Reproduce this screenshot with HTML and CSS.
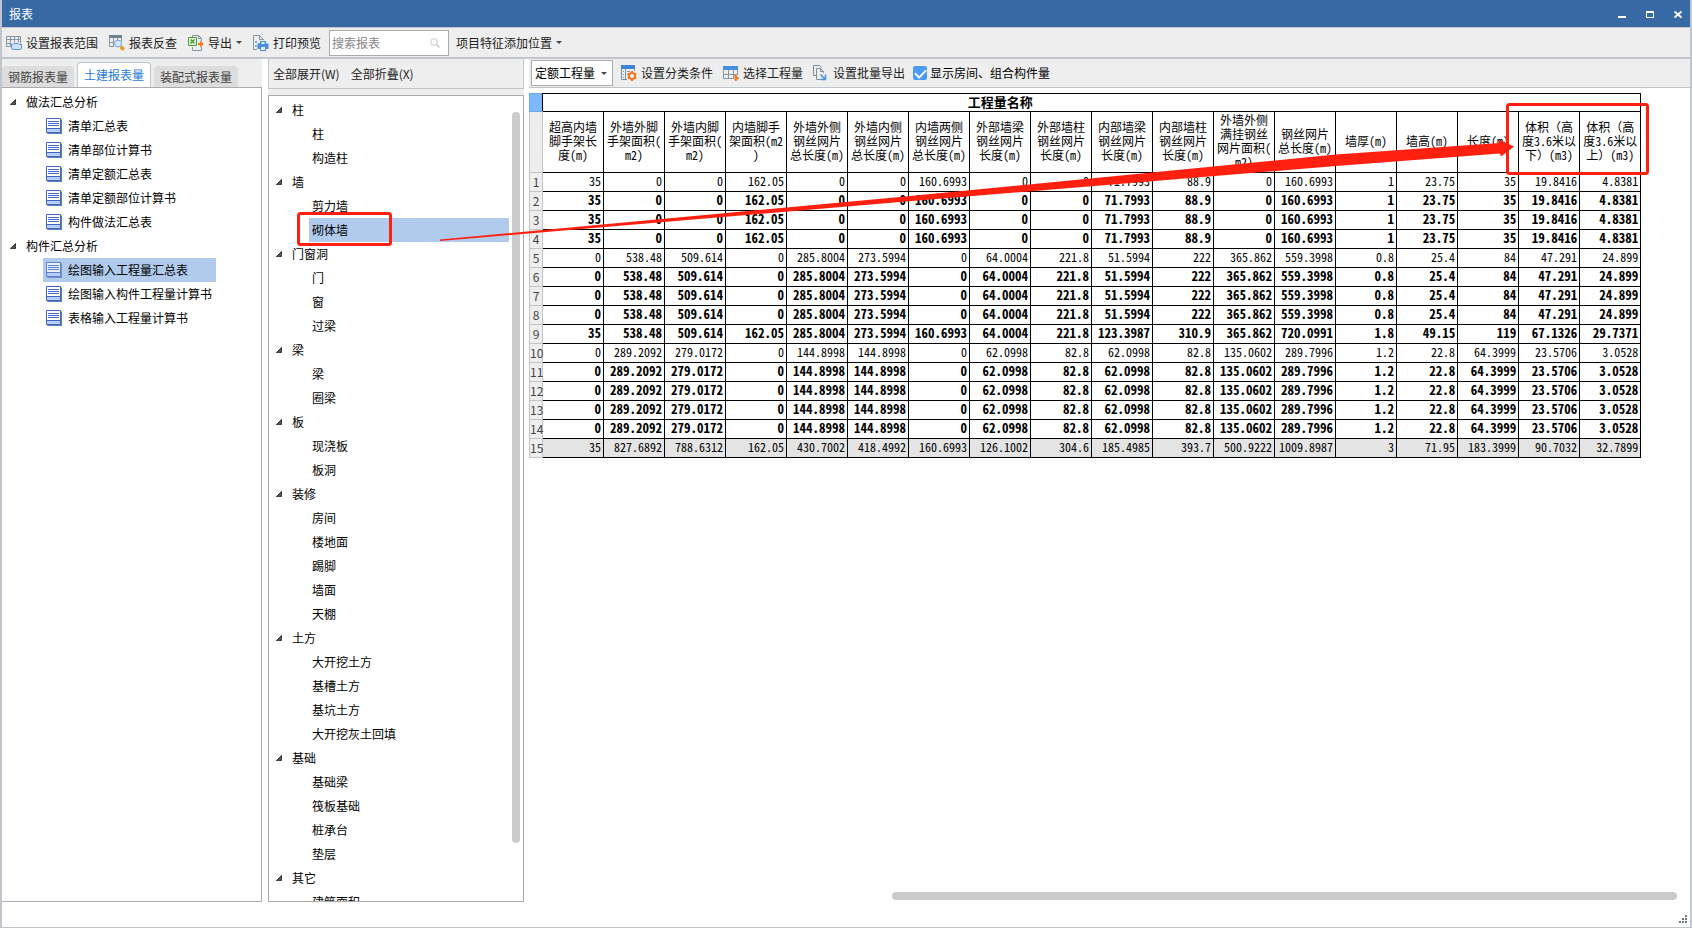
FILE: index.html
```html
<!DOCTYPE html>
<html lang="zh-CN">
<head>
<meta charset="utf-8">
<title>报表</title>
<link rel="stylesheet" href="styles.css">
</head>
<body>
<div class="window">
  <header class="titlebar">
    <h1 class="title">报表</h1>
    <div class="window-buttons">
      <button class="window-button" aria-label="最小化"><svg width="10" height="10"><path d="M1 7h8v2H1z" fill="#fff"/></svg></button>
      <button class="window-button" aria-label="最大化"><svg width="10" height="10"><path d="M1 2h8v7H1zM2 4v4h6V4z" fill="#fff" fill-rule="evenodd"/></svg></button>
      <button class="window-button" aria-label="关闭"><svg width="10" height="10"><path d="M1.5 2.5l7 6M8.500 2.500l-7 6" stroke="#fff" stroke-width="1.800"/></svg></button>
    </div>
  </header>

  <div class="toolbar">
    <button class="tool">
      <svg width="16" height="16" fill="none"><path d="M.5 1.500h14v7M.5 1.500v10H5M.5 4.500h14M.5 8.500h5M4.500 1.500v10M8.500 1.500v6M12.500 1.500v6" stroke="#8796a3"/><path d="M5.500 9.500h1.500l1-1h4l1 1h2.500v4l-1.500 1h-7l-1.500-1z" fill="#cfe2f8" stroke="#5b93d8"/></svg>设置报表范围</button>
    <button class="tool">
      <svg width="16" height="16" fill="none"><path d="M0 0h13v3H0z" fill="#73828f"/><path d="M.5 3v8.500H5M.5 7.500H5M4.500 3v9M8.500 3v2M12.500 3v3" stroke="#8796a3"/><circle cx="9" cy="8.500" r="3.500" fill="#d6e8fb" stroke="#6fa3e4"/><path d="M13 10.500l3 3-2.500 2.500-3-3z" fill="#f7941d"/></svg>报表反查</button>
    <button class="tool">
      <svg width="16" height="16" fill="none"><path d="M4.500 2V.5h6l3 3V6M13.500 12v3.500h-9V12M10.500.5v3h3" stroke="#8796a3"/><path d="M.5 2.500h8v8h-8z" fill="#e9f5e4" stroke="#4b9b36"/><path d="M2.500 4.500l4 4M6.500 4.500l-4 4" stroke="#4b9b36" stroke-width="1.500"/><path d="M10 8h2V5.500L16 9l-4 3.500V10h-2z" fill="#f47a20"/></svg>导出<span class="caret"></span></button>
    <button class="tool">
      <svg width="16" height="16" fill="none"><path d="M4 14.500H.5V.5h6l4 4M6.500.5v4h4" stroke="#8796a3"/><path d="M2 6h2v2H2zM2 10h2v2H2zM5 8h2v2H5z" fill="#9dabb7"/><path d="M7 8.500V6h6v2.500h2.500V14H13v2H7v-2H4.500V8.500z" fill="#4a90e2"/><path d="M8.500 7h3v2h-3zM8 12h4v3H8z" fill="#e8f2fd"/></svg>打印预览</button>
    <div class="search">
      <input class="search-input" type="text" placeholder="搜索报表" aria-label="搜索报表">
      <svg class="search-icon" width="10" height="10" fill="none" stroke="#c9c9c9"><circle cx="4" cy="4" r="3.300"/><path d="M6.500 6.500L9.500 9.500" stroke-width="1.500"/></svg>
    </div>
    <button class="tool">项目特征添加位置<span class="caret"></span></button>
  </div>

  <main class="workspace">
    <section class="reports">
      <div class="tabs" role="tablist">
        <button class="tab" role="tab">钢筋报表量</button>
        <button class="tab tab-active" role="tab" aria-selected="true">土建报表量</button>
        <button class="tab" role="tab">装配式报表量</button>
      </div>
      <div class="report-panel">
        <svg class="symbols" width="0" height="0" aria-hidden="true">
          <symbol id="sheet" viewBox="0 0 16 16"><path d="M2 2h14v14H2z" fill="#8f98a8"/><path class="sheet-page" d="M.5.5h14v14H.5z"/><path class="sheet-foot" d="M1 11h13v3H1z"/><path class="sheet-line" d="M2 3.500h11M2 5.500h11M2 7.500h11M1 10.500h13" fill="none"/></symbol>
          <symbol id="fold" viewBox="0 0 7 7"><path d="M6.500.5v6H.5z" fill="#555" stroke="#222"/></symbol>
        </svg>
        <ul class="tree">
          <li><span class="branch"><svg class="fold"><use href="#fold"/></svg>做法汇总分析</span>
            <ul class="tree">
              <li><a class="report" href="#"><svg class="sheet"><use href="#sheet"/></svg>清单汇总表</a></li>
              <li><a class="report" href="#"><svg class="sheet"><use href="#sheet"/></svg>清单部位计算书</a></li>
              <li><a class="report" href="#"><svg class="sheet"><use href="#sheet"/></svg>清单定额汇总表</a></li>
              <li><a class="report" href="#"><svg class="sheet"><use href="#sheet"/></svg>清单定额部位计算书</a></li>
              <li><a class="report" href="#"><svg class="sheet"><use href="#sheet"/></svg>构件做法汇总表</a></li>
            </ul>
          </li>
          <li><span class="branch"><svg class="fold"><use href="#fold"/></svg>构件汇总分析</span>
            <ul class="tree">
              <li><a class="report report-selected" href="#"><svg class="sheet"><use href="#sheet"/></svg>绘图输入工程量汇总表</a></li>
              <li><a class="report" href="#"><svg class="sheet"><use href="#sheet"/></svg>绘图输入构件工程量计算书</a></li>
              <li><a class="report" href="#"><svg class="sheet"><use href="#sheet"/></svg>表格输入工程量计算书</a></li>
            </ul>
          </li>
        </ul>
      </div>
    </section>

    <section class="components">
      <div class="fold-bar">
        <button class="tool">全部展开(W)</button>
        <button class="tool">全部折叠(X)</button>
      </div>
      <div class="component-panel">
        <ul class="tree component-tree">
          <li><span class="branch"><svg class="fold"><use href="#fold"/></svg>柱</span>
            <ul class="tree"><li><a class="component" href="#">柱</a></li><li><a class="component" href="#">构造柱</a></li></ul></li>
          <li><span class="branch"><svg class="fold"><use href="#fold"/></svg>墙</span>
            <ul class="tree"><li><a class="component" href="#">剪力墙</a></li><li><a class="component component-selected" href="#">砌体墙</a></li></ul></li>
          <li><span class="branch"><svg class="fold"><use href="#fold"/></svg>门窗洞</span>
            <ul class="tree"><li><a class="component" href="#">门</a></li><li><a class="component" href="#">窗</a></li><li><a class="component" href="#">过梁</a></li></ul></li>
          <li><span class="branch"><svg class="fold"><use href="#fold"/></svg>梁</span>
            <ul class="tree"><li><a class="component" href="#">梁</a></li><li><a class="component" href="#">圈梁</a></li></ul></li>
          <li><span class="branch"><svg class="fold"><use href="#fold"/></svg>板</span>
            <ul class="tree"><li><a class="component" href="#">现浇板</a></li><li><a class="component" href="#">板洞</a></li></ul></li>
          <li><span class="branch"><svg class="fold"><use href="#fold"/></svg>装修</span>
            <ul class="tree"><li><a class="component" href="#">房间</a></li><li><a class="component" href="#">楼地面</a></li><li><a class="component" href="#">踢脚</a></li><li><a class="component" href="#">墙面</a></li><li><a class="component" href="#">天棚</a></li></ul></li>
          <li><span class="branch"><svg class="fold"><use href="#fold"/></svg>土方</span>
            <ul class="tree"><li><a class="component" href="#">大开挖土方</a></li><li><a class="component" href="#">基槽土方</a></li><li><a class="component" href="#">基坑土方</a></li><li><a class="component" href="#">大开挖灰土回填</a></li></ul></li>
          <li><span class="branch"><svg class="fold"><use href="#fold"/></svg>基础</span>
            <ul class="tree"><li><a class="component" href="#">基础梁</a></li><li><a class="component" href="#">筏板基础</a></li><li><a class="component" href="#">桩承台</a></li><li><a class="component" href="#">垫层</a></li></ul></li>
          <li><span class="branch"><svg class="fold"><use href="#fold"/></svg>其它</span>
            <ul class="tree"><li><a class="component" href="#">建筑面积</a></li></ul></li>
        </ul>
        <div class="scroll-track"><div class="scroll-thumb"></div></div>
      </div>
    </section>

    <section class="sheet-area">
      <div class="sheet-bar">
        <span class="kind"><select class="kind-select" aria-label="工程量类型"><option>定额工程量</option></select><span class="caret"></span></span>
        <button class="tool">
          <svg width="16" height="16" fill="none"><path d="M0 0h14v4H0z" fill="#3f83d8"/><path d="M.5 4v10.500H6M13.500 4v2M4.500 4v10M2 6.500h1M2 9.500h1M2 12.500h1M6 6.500h3M6 9.500h1" stroke="#7f8f9e"/><circle cx="11" cy="11" r="3" stroke="#f0792b" stroke-width="2"/><path d="M11 6v2M11 14v2M6.700 8.500l1.700 1M13.600 12.500l1.700 1M6.700 13.500l1.700-1M13.600 9.500l1.700-1" stroke="#f0792b" stroke-width="2"/></svg>设置分类条件</button>
        <button class="tool">
          <svg width="16" height="16" fill="none"><path d="M0 1h15v4H0z" fill="#4a8fdf"/><path d="M.5 5v8.500H11M14.500 5v5M0 9.500h14M5.500 5v8M10.500 5v8" stroke="#8796a3"/><path d="M12 9.500l4 4-2 .3-1 2.200-1-1z" fill="#f47a20" stroke="#f47a20"/></svg>选择工程量</button>
        <button class="tool">
          <svg width="16" height="16" fill="none"><path d="M3 10.500H.5V.5h6l2 2" stroke="#7f8f9e"/><path d="M8 14.500H3.500v-11h4l3 3V8M7.500 3.500v3h3" stroke="#7f8f9e"/><path d="M7.500 9.500l4.500 4.500M12.500 9.500v5H8" stroke="#4a8fdf" stroke-width="1.500"/></svg>设置批量导出</button>
        <label class="show-rooms"><input class="check" type="checkbox" checked>显示房间、组合构件量</label>
      </div>
      <div class="sheet-body">
        <table class="quantities">
          <colgroup><col class="col-number"><col span="18" class="col-value"></colgroup>
          <thead>
            <tr class="caption-row"><td class="corner"></td><th class="caption" colspan="15">工程量名称</th><th class="caption-rest" colspan="3"></th></tr>
            <tr class="head-row">
              <td class="number"></td>
              <th>超高内墙<br>脚手架长<br>度(m)</th>
              <th>外墙外脚<br>手架面积(<br>m2)</th>
              <th>外墙内脚<br>手架面积(<br>m2)</th>
              <th>内墙脚手<br>架面积(m2<br>)</th>
              <th>外墙外侧<br>钢丝网片<br>总长度(m)</th>
              <th>外墙内侧<br>钢丝网片<br>总长度(m)</th>
              <th>内墙两侧<br>钢丝网片<br>总长度(m)</th>
              <th>外部墙梁<br>钢丝网片<br>长度(m)</th>
              <th>外部墙柱<br>钢丝网片<br>长度(m)</th>
              <th>内部墙梁<br>钢丝网片<br>长度(m)</th>
              <th>内部墙柱<br>钢丝网片<br>长度(m)</th>
              <th>外墙外侧<br>满挂钢丝<br>网片面积(<br>m2)</th>
              <th>钢丝网片<br>总长度(m)</th>
              <th>墙厚(m)</th>
              <th>墙高(m)</th>
              <th>长度(m)</th>
              <th>体积（高<br>度3.6米以<br>下）(m3)</th>
              <th>体积（高<br>度3.6米以<br>上）(m3)</th>
            </tr>
          </thead>
          <tbody id="rows"></tbody>
        </table>
        <div class="scroll-bottom"><div class="scroll-bottom-thumb"></div></div>
      </div>
    </section>
  </main>
  <footer class="statusbar">
    <svg width="10" height="10" fill="#6d7480"><path d="M7 0h2v2H7zM4 3h2v2H4zM7 3h2v2H7zM1 6h2v2H1zM4 6h2v2H4zM7 6h2v2H7z"/></svg>
  </footer>

  <svg class="markup" width="1692" height="300" aria-hidden="true">
    <g fill="none" stroke="#ff2010" stroke-width="3"><rect x="298.500" y="213.500" width="92" height="31" rx="2"/><rect x="1507.500" y="104.500" width="140" height="69" rx="2"/></g>
    <path d="M440 239.500L900 197L1336 154.500L1499 143V139.500L1514 146.500L1501 156.500L1500 153.500L1336 166L900 202L440 241z" fill="#ff2010"/>
  </svg>
</div>
<script src="rows.js"></script>
</body>
</html>
```
FILE: styles.css
```css
* { box-sizing: border-box; }
body { margin: 0; }
body, button, input, select {
  font: 12px/16px "Noto Sans CJK SC", sans-serif;
  color: #000;
}
button { padding: 0; border: 0; background: none; white-space: nowrap; }
ul { margin: 0; padding: 0; list-style: none; }
a { color: inherit; text-decoration: none; }

.window {
  position: relative;
  display: flex;
  flex-direction: column;
  height: 100vh;
  border: solid #c0c5ce;
  border-width: 0 2px 1px;
  background: #fff;
  overflow: hidden;
}

.titlebar {
  flex: none;
  display: flex;
  justify-content: space-between;
  align-items: center;
  height: 27px;
  margin: 0 -2px;
  padding: 0 9px;
  background: #376aa5;
}
.title { margin: 0; font-size: 12px; font-weight: 400; color: #fff; }
.window-buttons { display: flex; gap: 18px; }
.window-button { display: flex; width: 10px; height: 10px; }

.toolbar {
  flex: none;
  display: flex;
  align-items: center;
  gap: 11px;
  height: 32px;
  padding-left: 4px;
  border-top: 1px solid #c0c5ce;
  border-bottom: 2px solid #c0c5ce;
  background: #eee;
}
.tool { display: flex; align-items: center; gap: 4px; color: #222; }
.caret {
  border: 3px solid transparent;
  border-top-color: #444;
  border-bottom: 0;
}
.search {
  display: flex;
  align-items: center;
  width: 120px;
  height: 26px;
  margin: 0 -4px 0 -3px;
  padding: 0 8px 0 2px;
  border: 1px solid #ababab;
  background: #fff;
}
.search-input { flex: 1; min-width: 0; padding: 0; border: 0; outline: 0; }
.search-input::placeholder { color: #868686; }

.workspace { flex: 1; display: flex; min-height: 0; }

.reports { flex: none; display: flex; flex-direction: column; width: 260px; background: #eee; }
.tabs { display: flex; align-items: flex-end; gap: 3px; height: 28px; }
.tab {
  height: 21px;
  padding: 0 6px;
  border-radius: 4px 4px 0 0;
  background: #ddd;
  color: #444;
}
.tab-active {
  height: 25px;
  border: 1px solid #c0c5ce;
  border-bottom: 0;
  background: #fff;
  color: #1f7ae0;
}
.report-panel {
  flex: 1;
  padding-top: 2px;
  border: 1px solid #ababb0;
  border-left: 0;
  background: #fff;
}
.symbols { display: block; }

.branch { display: flex; align-items: center; gap: 10px; height: 24px; padding-left: 8px; }
.fold { width: 6px; height: 6px; }
.report {
  display: flex;
  align-items: center;
  gap: 6px;
  width: 173px;
  height: 24px;
  margin-left: 41px;
  padding-left: 3px;
}
.report-selected, .component-selected { background: #b1cbec; }
.sheet { width: 16px; height: 16px; fill: #fff; stroke: #3f66c4; }
.sheet-page { stroke: #3f66c4; fill: #fff; }
.sheet-foot { stroke: none; fill: #b9cdfa; }
.report-selected .sheet { opacity: .75; }

.components {
  flex: none;
  display: flex;
  flex-direction: column;
  width: 256px;
  margin: 0 5px 0 6px;
  background: #eee;
}
.fold-bar {
  flex: none;
  display: flex;
  align-items: center;
  gap: 11px;
  height: 30px;
  margin-bottom: 6px;
  padding-left: 4px;
  border: 1px solid #c0c5ce;
  border-top: 0;
}
.component-panel {
  flex: 1;
  display: flex;
  min-height: 0;
  padding-top: 2px;
  border: 1px solid #ababab;
  background: #fff;
  overflow: hidden;
}
.component-tree { flex: 1; margin-right: 3px; }
.component-tree .branch { padding-left: 7px; }
.component { display: block; height: 24px; margin-left: 40px; padding-left: 3px; line-height: 24px; }
.scroll-track { flex: none; width: 11px; padding: 14px 3px 58px 0; }
.scroll-thumb { width: 8px; height: 100%; border-radius: 4px; background: #cbcbcb; }

.sheet-area { flex: 1; display: flex; flex-direction: column; min-width: 0; }
.sheet-bar {
  flex: none;
  display: flex;
  align-items: center;
  gap: 10px;
  height: 29px;
  padding-left: 2px;
  border-bottom: 1px solid #c0c5ce;
  background: #eee;
}
.kind {
  display: flex;
  align-items: center;
  width: 82px;
  height: 26px;
  margin-right: -2px;
  padding: 0 5px 0 3px;
  border: 1px solid #ababab;
  background: #fff;
}
.kind-select { flex: 1; min-width: 0; padding: 0; border: 0; appearance: none; background: none; }
.show-rooms { display: flex; align-items: center; gap: 3px; margin-left: -2px; }
.check {
  display: flex;
  justify-content: center;
  width: 14px;
  height: 14px;
  margin: 0;
  border-radius: 2px;
  appearance: none;
  background: #fff;
}
.check:checked { background: #4a9bf5; }
.check:checked::after {
  content: "";
  width: 5px;
  height: 9px;
  margin-top: 1px;
  border: solid #fff;
  border-width: 0 2px 2px 0;
  transform: rotate(45deg);
}

.sheet-body { flex: 1; display: flex; flex-direction: column; min-height: 0; padding-top: 5px; }
.quantities {
  width: 1111px;
  table-layout: fixed;
  border-collapse: collapse;
}
.col-number { width: 13px; }
.col-value { width: 61px; }
.quantities th, .quantities td {
  padding: 0 0 2px;
  border: 1px solid #000;
  font-family: "Noto Sans Mono CJK SC", "Noto Sans CJK SC", monospace;
  font-size: 12px;
  line-height: 14px;
  white-space: nowrap;
}
.quantities th { font-weight: 400; }
.quantities .caption { border-right: 0; font-size: 13px; font-weight: 700; }
.quantities .caption-rest { border-left: 0; }
.caption-row { height: 18px; }
.head-row { height: 61px; }
.value-row { height: 19px; }
.quantities .value { padding-right: 2px; text-align: right; }
.quantities .bold-row .value { font-size: 13px; font-weight: 700; }
.total-row .value { background: #e4e4e4; }
.quantities .corner { border: 1px solid #6aa9ee; border-right-color: #000; background: #7fb8fa; }
.quantities .number {
  padding: 0;
  border-color: #c4c4c4;
  background: #eee;
  font-family: "Noto Sans CJK SC", sans-serif;
  color: #444;
  text-align: center;
}
.scroll-bottom { margin-top: auto; padding: 0 13px 2px 363px; }
.scroll-bottom-thumb { height: 8px; border-radius: 4px; background: #cbcbcb; }

.statusbar { flex: none; display: flex; justify-content: flex-end; align-items: flex-end; height: 25px; padding: 2px; }

.markup { position: absolute; left: -2px; top: 0; pointer-events: none; }
```
FILE: rows.js
```js
const wall = "35 0 0 162.05 0 0 160.6993 0 0 71.7993 88.9 0 160.6993 1 23.75 35 19.8416 4.8381";
const second = "0 538.48 509.614 0 285.8004 273.5994 0 64.0004 221.8 51.5994 222 365.862 559.3998 0.8 25.4 84 47.291 24.899";
const sum = "35 538.48 509.614 162.05 285.8004 273.5994 160.6993 64.0004 221.8 123.3987 310.9 365.862 720.0991 1.8 49.15 119 67.1326 29.7371";
const third = "0 289.2092 279.0172 0 144.8998 144.8998 0 62.0998 82.8 62.0998 82.8 135.0602 289.7996 1.2 22.8 64.3999 23.5706 3.0528";
const total = "35 827.6892 788.6312 162.05 430.7002 418.4992 160.6993 126.1002 304.6 185.4985 393.7 500.9222 1009.8987 3 71.95 183.3999 90.7032 32.7899";

const rows = [
  wall, wall, wall, wall,
  second, second, second, second,
  sum,
  third, third, third, third, third,
  total,
];
const plainRows = [0, 4, 9, 14];

document.getElementById("rows").innerHTML = rows.map((row, i) => {
  const kinds = ["value-row"];
  if (!plainRows.includes(i)) kinds.push("bold-row");
  if (row === total) kinds.push("total-row");
  const cells = row.split(" ").map((v) => `<td class="value">${v}</td>`).join("");
  return `<tr class="${kinds.join(" ")}"><td class="number">${i + 1}</td>${cells}</tr>`;
}).join("");
```
